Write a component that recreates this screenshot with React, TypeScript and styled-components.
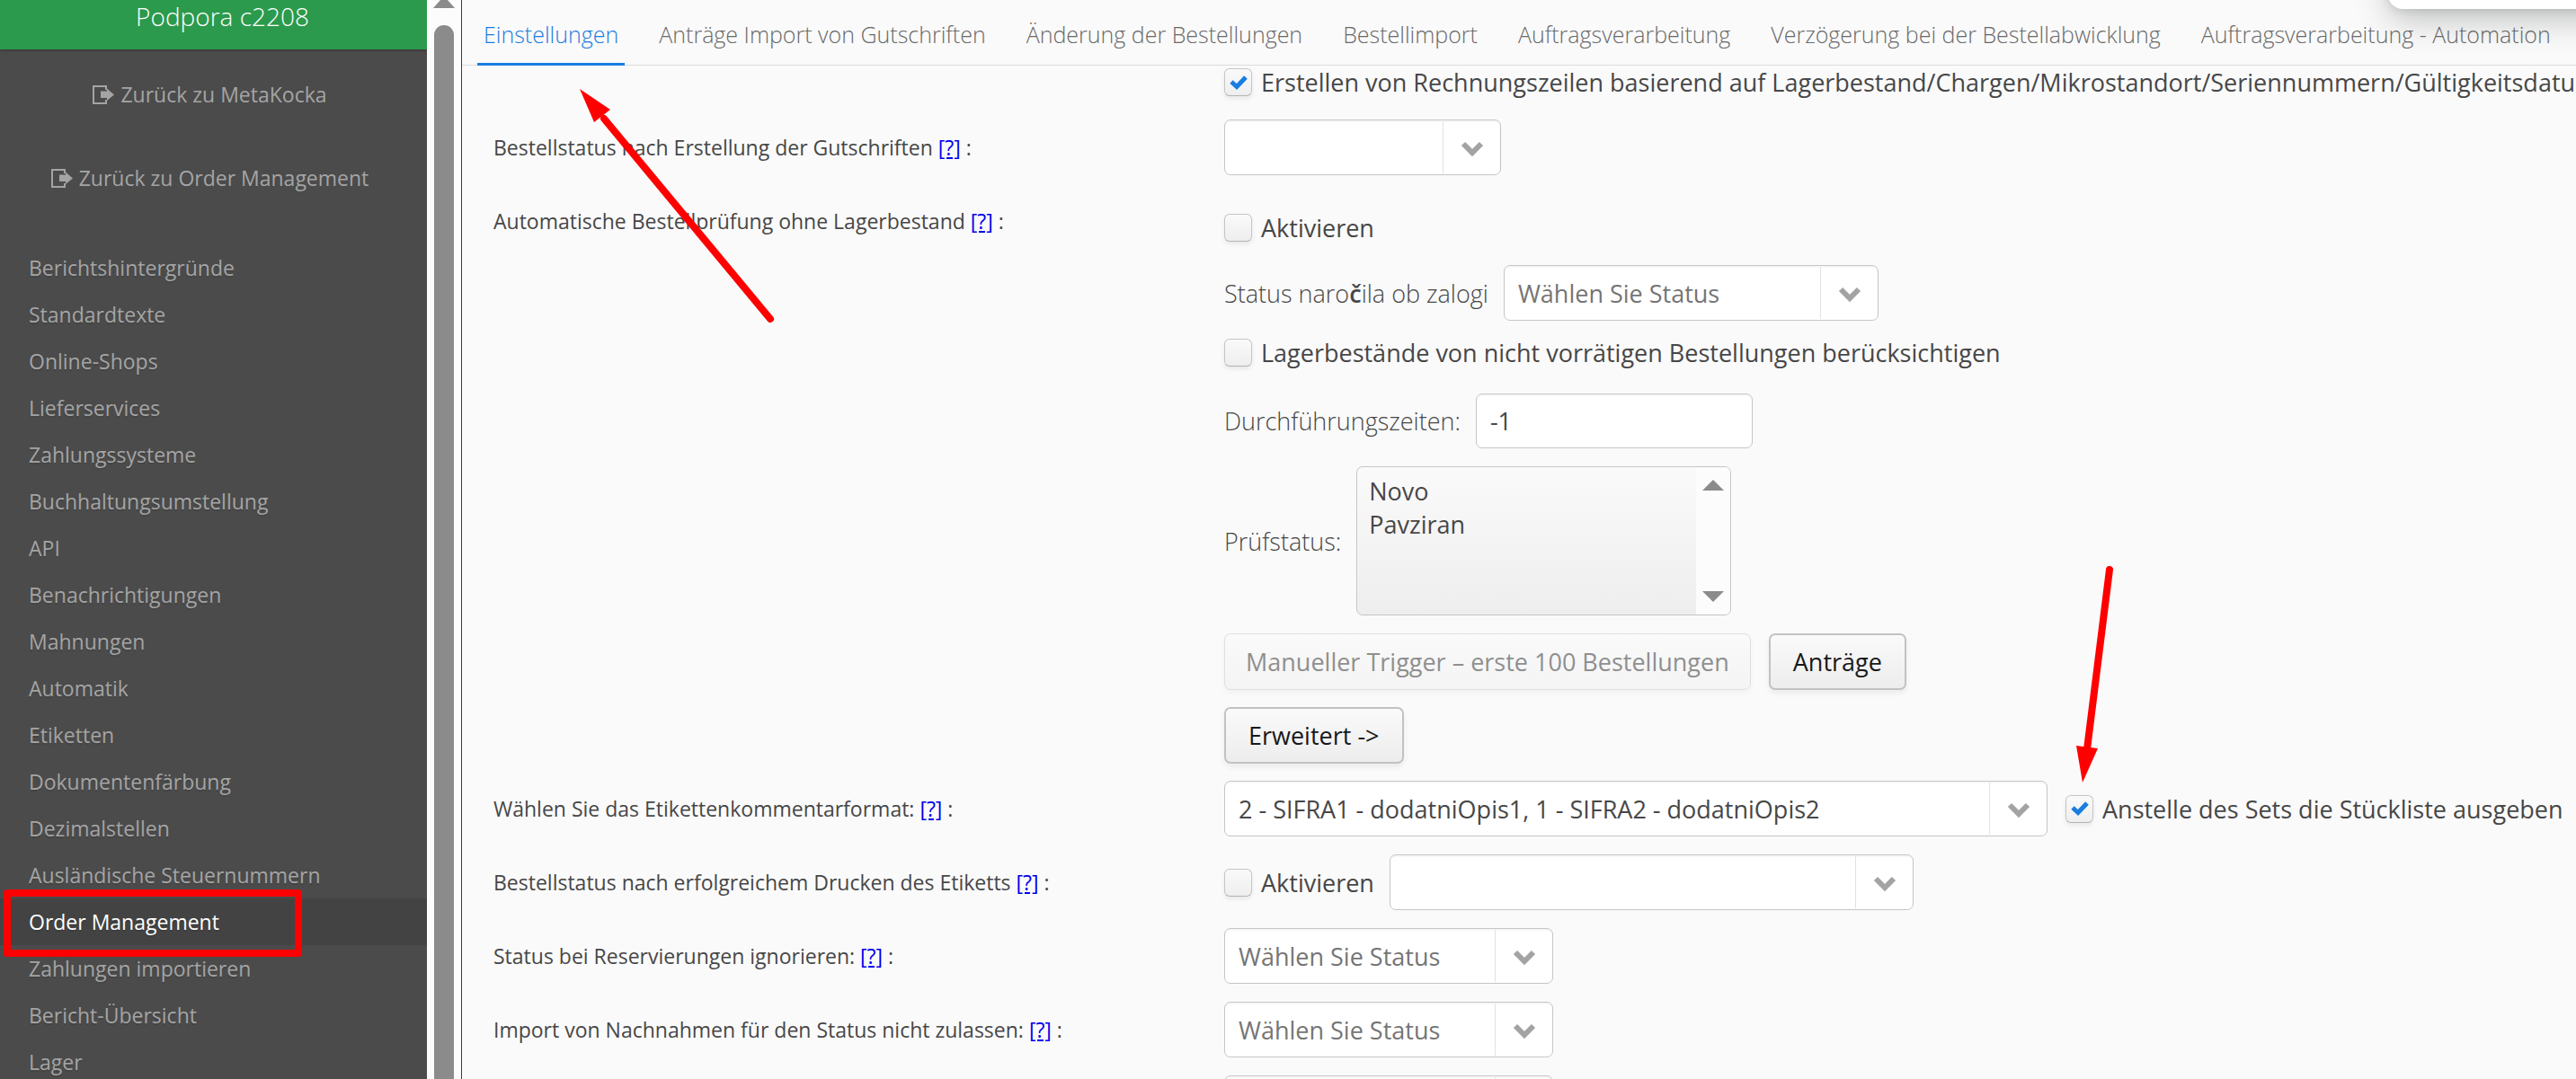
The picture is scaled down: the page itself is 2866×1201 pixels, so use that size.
import React from "react";
import styled, { createGlobalStyle } from "styled-components";

const GlobalStyle = createGlobalStyle`
  *, *::before, *::after { box-sizing: border-box; }
  body {
    margin: 0;
    overflow: hidden;
    background: #fafafa;
    color: #474747;
    font-family: "Open Sans", "Noto Sans", sans-serif;
    font-size: 27px;
    line-height: 37px;
  }
  button, input, select, option { font: inherit; color: inherit; }
`;

const Page = styled.div`
  position: relative;
  display: flex;
  height: 100vh;
  overflow: hidden;
`;

/* ---------- Sidebar ---------- */

const Sidebar = styled.aside`
  display: flex;
  flex-direction: column;
  flex: none;
  width: 475px;
  background: #4b4b4b;
  color: #a4a4a4;
  font-size: 23px;
`;

const Account = styled.header`
  flex: none;
  height: 55px;
  padding-left: 20px;
  background: #2b9a4c;
  color: #fff;
  font-size: 28px;
  font-weight: 300;
  text-align: center;
  box-shadow: 0 1px 3px rgba(0, 0, 0, 0.3);
`;

const BackLinks = styled.div`
  display: flex;
  flex-direction: column;
  flex: none;
  padding: 4px 8px 27px 0;
`;

const BackLink = styled.a`
  display: flex;
  align-items: center;
  justify-content: center;
  gap: 7px;
  height: 93px;
  color: inherit;
  text-decoration: none;
`;

const ExitIcon = styled.svg`
  width: 24px;
  height: 21px;
`;

const Menu = styled.nav`
  display: flex;
  flex-direction: column;
`;

const MenuItem = styled.a<{ $active?: boolean }>`
  position: relative;
  display: flex;
  flex: none;
  align-items: center;
  height: 52px;
  padding-left: 32px;
  background: ${(p) => (p.$active ? "#434343" : "transparent")};
  color: ${(p) => (p.$active ? "#fff" : "inherit")};
  font-weight: ${(p) => (p.$active ? 500 : 400)};
  text-decoration: none;
  text-shadow: 0 2px 0 rgba(0, 0, 0, 0.1);
  white-space: nowrap;
`;

const Highlight = styled.span`
  position: absolute;
  z-index: 2;
  left: 4px;
  top: -10px;
  width: 332px;
  height: 75px;
  border: 8px solid #f00;
  border-radius: 4px;
`;

const ScrollTrack = styled.div`
  display: flex;
  flex: none;
  flex-direction: column;
  align-items: center;
  gap: 19px;
  width: 39px;
  border-right: 1px solid #3c3c3c;
  background: #fcfcfc;
`;

const Thumb = styled.div`
  flex: 1;
  width: 22px;
  border-radius: 11px 11px 0 0;
  background: #8b8b8b;
`;

const Triangle = styled.svg`
  display: block;
  flex: none;
  fill: #8b8b8b;
`;

/* ---------- Main area ---------- */

const Main = styled.main`
  flex: 1;
  min-width: 0;
  overflow: hidden;
`;

const Tabs = styled.nav`
  display: flex;
  gap: 31px;
  height: 73px;
  padding-left: 17px;
  border-bottom: 1px solid #dcdcdc;
`;

const Tab = styled.a<{ $active?: boolean }>`
  height: 73px;
  padding: 20px 7px 0;
  border-bottom: 3px solid ${(p) => (p.$active ? "#197de1" : "transparent")};
  color: ${(p) => (p.$active ? "#197de1" : "#696969")};
  font-size: 25px;
  font-weight: 300;
  text-decoration: none;
  white-space: nowrap;
`;

const Form = styled.form`
  display: flex;
  flex-direction: column;
  gap: 20px;
  padding: 3px 0 0 35px;
`;

const Row = styled.div`
  display: grid;
  grid-template-columns: 813px 1fr;
`;

const RowLabel = styled.div`
  height: 62px;
  font-size: 23px;
  line-height: 62px;
  white-space: nowrap;
`;

const Help = styled.a`
  color: #0000ee;
  text-decoration: underline;
`;

const Stack = styled.div`
  display: flex;
  flex-direction: column;
  align-items: flex-start;
  gap: 20px;
  grid-column: 2;
`;

const Line = styled.div<{ $tight?: boolean }>`
  display: flex;
  align-items: center;
  gap: ${(p) => (p.$tight ? 17 : 20)}px;
`;

const CheckLine = styled.div<{ $above?: number; $below: number }>`
  padding: ${(p) => p.$above ?? 0}px 0 ${(p) => p.$below}px;
`;

const CheckLabel = styled.label`
  display: flex;
  align-items: center;
  gap: 10px;
  height: 31px;
  white-space: nowrap;
`;

const CheckFrame = styled.span`
  display: grid;
  flex: none;
  width: 31px;
  height: 31px;
  place-items: center;

  & > * { grid-area: 1 / 1; }
`;

const CheckInput = styled.input`
  width: 31px;
  height: 31px;
  margin: 0;
  appearance: none;
  border: 1px solid #c5c5c5;
  border-bottom-color: #b4b4b4;
  border-radius: 6px;
  background: linear-gradient(#fafafa, #eeeeee);
  box-shadow: 0 3px 5px rgba(0, 0, 0, 0.07);
`;

const Tick = styled.svg`
  width: 20px;
  height: 16px;
  fill: none;
  stroke: #197de1;
  stroke-width: 5;
  pointer-events: none;
`;

const FieldLabel = styled.label`
  font-weight: 300;
  white-space: nowrap;
`;

const Accent = styled.span`
  font-weight: 600;
`;

const TextInput = styled.input`
  width: 308px;
  height: 61px;
  padding: 0 15px;
  border: 1px solid #c5c5c5;
  border-radius: 7px;
  background: #fff;
  box-shadow: inset 0 2px 1px #f7f7f7;
`;

const ComboFrame = styled.div<{ $width: number }>`
  display: grid;
  grid-template-columns: 1fr 65px;
  flex: none;
  width: ${(p) => p.$width}px;
  height: 62px;
`;

const ComboSelect = styled.select<{ $hint?: boolean }>`
  grid-area: 1 / 1 / 2 / 3;
  width: 100%;
  height: 62px;
  padding: 0 80px 0 15px;
  appearance: none;
  border: 1px solid #c5c5c5;
  border-radius: 7px;
  background: #fff;
  box-shadow: inset 0 2px 1px #f7f7f7;
  color: ${(p) => (p.$hint ? "#757575" : "#474747")};
`;

const ComboArrow = styled.span`
  display: flex;
  grid-area: 1 / 2;
  z-index: 1;
  align-items: center;
  justify-content: center;
  margin: 2px 0;
  padding-top: 3px;
  border-left: 1px solid #e2e2e2;
  pointer-events: none;
`;

const ListFrame = styled.div`
  display: flex;
  width: 417px;
  height: 166px;
  overflow: hidden;
  border: 1px solid #c5c5c5;
  border-radius: 7px;
  background: linear-gradient(#fafafa, #eeeeee);
`;

const ListSelect = styled.select`
  flex: 1;
  height: 164px;
  padding: 8px 11px;
  overflow: hidden;
  appearance: none;
  border: 0;
  outline: 0;
  background: transparent;

  option {
    height: 37px;
    min-height: 37px;
    padding: 0 2px;
    line-height: 37px;
  }
`;

const ListScroll = styled.div`
  display: flex;
  flex-direction: column;
  align-items: center;
  justify-content: space-between;
  width: 38px;
  padding: 14px 0;
  background: #fcfcfc;
`;

const Button = styled.button`
  height: 63px;
  margin-bottom: -1px;
  padding: 0 25px;
  border: 2px solid #c2c2c2;
  border-radius: 7px;
  background: linear-gradient(#fafafa, #ededed);
  box-shadow: 0 4px 6px rgba(0, 0, 0, 0.06);
  color: #191919;
  white-space: nowrap;

  &:disabled {
    border: 1px solid #dfdfdf;
    background: linear-gradient(#fafafa, #f4f4f4);
    box-shadow: 0 4px 6px rgba(0, 0, 0, 0.03);
    color: #8f8f8f;
    padding: 0 23px;
  }
`;

/* ---------- Things lying over the page ---------- */

const Popup = styled.div`
  position: absolute;
  top: -40px;
  right: -40px;
  width: 249px;
  height: 50px;
  border-radius: 16px;
  background: #fff;
  box-shadow: 0 12px 36px rgba(60, 64, 67, 0.3), 0 2px 10px rgba(60, 64, 67, 0.14);
`;

const Arrow = styled.svg<{ $left: number; $top: number }>`
  position: absolute;
  left: ${(p) => p.$left}px;
  top: ${(p) => p.$top}px;
  fill: #f00;
  stroke: #f00;
  pointer-events: none;
`;

const menuItems = [
  "Berichtshintergründe",
  "Standardtexte",
  "Online-Shops",
  "Lieferservices",
  "Zahlungssysteme",
  "Buchhaltungsumstellung",
  "API",
  "Benachrichtigungen",
  "Mahnungen",
  "Automatik",
  "Etiketten",
  "Dokumentenfärbung",
  "Dezimalstellen",
  "Ausländische Steuernummern",
  "Order Management",
  "Zahlungen importieren",
  "Bericht-Übersicht",
  "Lager",
];

const tabItems = [
  "Einstellungen",
  "Anträge Import von Gutschriften",
  "Änderung der Bestellungen",
  "Bestellimport",
  "Auftragsverarbeitung",
  "Verzögerung bei der Bestellabwicklung",
  "Auftragsverarbeitung - Automation",
];

function Exit() {
  return (
    <ExitIcon viewBox="0 0 24 21" aria-hidden="true">
      <path d="M15 5V1H1v19h14v-4" fill="none" stroke="currentColor" strokeWidth="2" />
      <path d="M9 6.5h7V3.5l8 7-8 6.5v-3H9z" fill="currentColor" />
    </ExitIcon>
  );
}

function Check({ children, checked }: { children: React.ReactNode; checked?: boolean }) {
  return (
    <CheckLabel>
      <CheckFrame>
        <CheckInput type="checkbox" defaultChecked={checked} />
        {checked && (
          <Tick viewBox="0 0 20 16" aria-hidden="true">
            <path d="M2 7l6 5.500L18 2" />
          </Tick>
        )}
      </CheckFrame>
      {children}
    </CheckLabel>
  );
}

function Combo(props: { width: number; label: string; value?: string; hint?: boolean; id?: string }) {
  const { width, label, value = "", hint, id } = props;
  return (
    <ComboFrame $width={width}>
      <ComboSelect id={id} aria-label={label} $hint={hint}>
        <option>{value}</option>
      </ComboSelect>
      <ComboArrow>
        <svg width="26" height="17" viewBox="0 0 26 17" aria-hidden="true">
          <path d="M3 3l10 10L23 3" fill="none" stroke="#a3a3a3" strokeWidth="6" />
        </svg>
      </ComboArrow>
    </ComboFrame>
  );
}

function Setting({ label, children }: { label: string; children: React.ReactNode }) {
  return (
    <Row>
      <RowLabel>
        {label} <Help href="#hilfe">[?]</Help> :
      </RowLabel>
      {children}
    </Row>
  );
}

export default function App() {
  return (
    <>
      <GlobalStyle />
      <Page>
        <Sidebar>
          <Account>Podpora c2208</Account>
          <BackLinks>
            <BackLink href="#metakocka">
              <Exit />
              Zurück zu MetaKocka
            </BackLink>
            <BackLink href="#orders">
              <Exit />
              Zurück zu Order Management
            </BackLink>
          </BackLinks>
          <Menu>
            {menuItems.map((item) => {
              const active = item === "Order Management";
              return (
                <MenuItem key={item} href="#menu" $active={active}>
                  {item}
                  {active && <Highlight />}
                </MenuItem>
              );
            })}
          </Menu>
        </Sidebar>
        <ScrollTrack>
          <Triangle width="24" height="9" viewBox="0 0 24 9">
            <path d="M8 0h8l8 9H0z" />
          </Triangle>
          <Thumb />
        </ScrollTrack>

        <Main>
          <Tabs>
            {tabItems.map((tab, i) => (
              <Tab key={tab} href="#tab" $active={i === 0}>
                {tab}
              </Tab>
            ))}
          </Tabs>
          <Form>
            <Row>
              <Stack>
                <CheckLine $below={6}>
                  <Check checked>
                    Erstellen von Rechnungszeilen basierend auf
                    Lagerbestand/Chargen/Mikrostandort/Seriennummern/Gültigkeitsdatum
                  </Check>
                </CheckLine>
              </Stack>
            </Row>
            <Setting label="Bestellstatus nach Erstellung der Gutschriften">
              <Combo width={308} label="Bestellstatus nach Erstellung der Gutschriften" />
            </Setting>
            <Setting label="Automatische Bestellprüfung ohne Lagerbestand">
              <Stack>
                <CheckLine $above={23} $below={6}>
                  <Check>Aktivieren</Check>
                </CheckLine>
                <Line $tight>
                  <FieldLabel htmlFor="stock-status">
                    Status naro<Accent>č</Accent>ila ob zalogi
                  </FieldLabel>
                  <Combo id="stock-status" width={417} label="Status naročila ob zalogi" value="Wählen Sie Status" hint />
                </Line>
                <CheckLine $below={10}>
                  <Check>Lagerbestände von nicht vorrätigen Bestellungen berücksichtigen</Check>
                </CheckLine>
                <Line $tight>
                  <FieldLabel htmlFor="run-times">Durchführungszeiten:</FieldLabel>
                  <TextInput id="run-times" defaultValue="-1" />
                </Line>
                <Line $tight>
                  <FieldLabel htmlFor="check-status">Prüfstatus:</FieldLabel>
                  <ListFrame>
                    <ListSelect id="check-status" multiple size={4}>
                      <option>Novo</option>
                      <option>Pavziran</option>
                    </ListSelect>
                    <ListScroll>
                      <Triangle width="24" height="12" viewBox="0 0 24 12">
                        <path d="M12 0l12 12H0z" />
                      </Triangle>
                      <Triangle width="24" height="12" viewBox="0 0 24 12">
                        <path d="M0 0h24L12 12z" />
                      </Triangle>
                    </ListScroll>
                  </ListFrame>
                </Line>
                <Line>
                  <Button type="button" disabled>
                    Manueller Trigger – erste 100 Bestellungen
                  </Button>
                  <Button type="button">Anträge</Button>
                </Line>
                <Button type="button">Erweitert -&gt;</Button>
              </Stack>
            </Setting>
            <Setting label="Wählen Sie das Etikettenkommentarformat:">
              <Line>
                <Combo
                  width={916}
                  label="Etikettenkommentarformat"
                  value="2 - SIFRA1 - dodatniOpis1, 1 - SIFRA2 - dodatniOpis2"
                />
                <Check checked>Anstelle des Sets die Stückliste ausgeben</Check>
              </Line>
            </Setting>
            <Setting label="Bestellstatus nach erfolgreichem Drucken des Etiketts">
              <Line $tight>
                <Check>Aktivieren</Check>
                <Combo width={583} label="Bestellstatus nach Etikettendruck" />
              </Line>
            </Setting>
            <Setting label="Status bei Reservierungen ignorieren:">
              <Combo width={366} label="Status bei Reservierungen" value="Wählen Sie Status" hint />
            </Setting>
            <Setting label="Import von Nachnahmen für den Status nicht zulassen:">
              <Combo width={366} label="Import von Nachnahmen" value="Wählen Sie Status" hint />
            </Setting>
            <Row>
              <Stack>
                <Combo width={366} label="Status" />
              </Stack>
            </Row>
          </Form>
        </Main>

        <Popup />
        <Arrow $left={640} $top={94} width="224" height="268" viewBox="640 94 224 268" aria-hidden="true">
          <path d="M672 132L857 355" strokeWidth="8" strokeLinecap="round" />
          <path d="M645 99l34 23-18 14z" stroke="none" />
        </Arrow>
        <Arrow $left={2304} $top={624} width="52" height="250" viewBox="2304 624 52 250" aria-hidden="true">
          <path d="M2347 634L2322 834" strokeWidth="8" strokeLinecap="round" />
          <path d="M2310 830l24 3-17 38z" stroke="none" />
        </Arrow>
      </Page>
    </>
  );
}
